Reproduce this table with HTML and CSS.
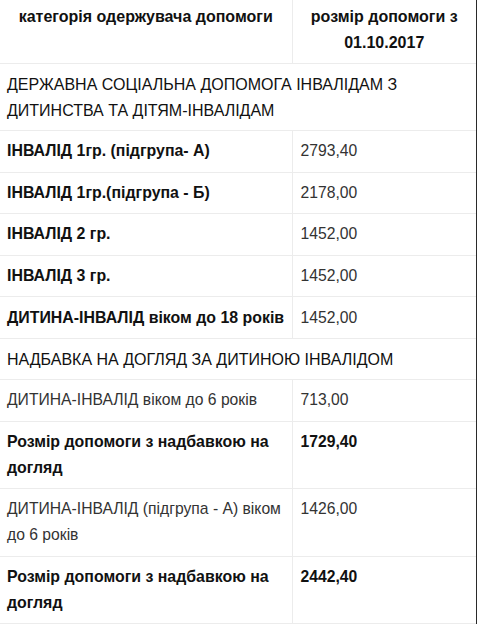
FILE: index.html
```html
<!DOCTYPE html>
<html lang="uk">
<head>
<meta charset="utf-8">
<title>Розмір допомоги</title>
<link rel="stylesheet" href="styles.css">
</head>
<body>
<div class="frame">
  <table class="aid-table">
    <colgroup>
      <col class="col-cat">
      <col class="col-sum">
    </colgroup>
    <thead>
      <tr>
        <th class="head-cell head-cat">категорія одержувача допомоги</th>
        <th class="head-cell head-sum">розмір допомоги з 01.10.2017</th>
      </tr>
    </thead>
    <tbody>
      <tr class="section">
        <td colspan="2">ДЕРЖАВНА СОЦІАЛЬНА ДОПОМОГА ІНВАЛІДАМ З ДИТИНСТВА ТА ДІТЯМ-ІНВАЛІДАМ</td>
      </tr>
      <tr>
        <td class="cat strong">ІНВАЛІД 1гр. (підгрупа- А)</td>
        <td class="sum">2793,40</td>
      </tr>
      <tr>
        <td class="cat strong">ІНВАЛІД 1гр.(підгрупа - Б)</td>
        <td class="sum">2178,00</td>
      </tr>
      <tr>
        <td class="cat strong">ІНВАЛІД 2 гр.</td>
        <td class="sum">1452,00</td>
      </tr>
      <tr>
        <td class="cat strong">ІНВАЛІД 3 гр.</td>
        <td class="sum">1452,00</td>
      </tr>
      <tr>
        <td class="cat strong">ДИТИНА-ІНВАЛІД віком до 18 років</td>
        <td class="sum">1452,00</td>
      </tr>
      <tr class="section">
        <td colspan="2">НАДБАВКА НА ДОГЛЯД ЗА ДИТИНОЮ ІНВАЛІДОМ</td>
      </tr>
      <tr>
        <td class="cat">ДИТИНА-ІНВАЛІД віком до 6 років</td>
        <td class="sum">713,00</td>
      </tr>
      <tr>
        <td class="cat strong">Розмір допомоги з надбавкою на догляд</td>
        <td class="sum strong-num">1729,40</td>
      </tr>
      <tr>
        <td class="cat">ДИТИНА-ІНВАЛІД (підгрупа - А) віком до 6 років</td>
        <td class="sum">1426,00</td>
      </tr>
      <tr>
        <td class="cat strong">Розмір допомоги з надбавкою на догляд</td>
        <td class="sum strong-num">2442,40</td>
      </tr>
    </tbody>
  </table>
</div>
</body>
</html>
```
FILE: styles.css
```css
html, body {
  margin: 0;
  padding: 0;
  background: #fff;
}

body {
  font-family: "Liberation Sans", Arial, sans-serif;
  font-size: 15.7px;
  line-height: 26px;
  color: #333;
}

.frame {
  width: 476px;
  border-right: 1px solid #2a2a2a;
  min-height: 624px;
}

.aid-table {
  width: 476px;
  border-collapse: collapse;
  table-layout: fixed;
}

.col-cat {
  width: 292px;
}

.col-sum {
  width: 184px;
}

.aid-table td,
.aid-table th {
  padding: 7.3px 7px;
  vertical-align: top;
  text-align: left;
  border-bottom: 1px solid #ececec;
}

.aid-table .cat,
.aid-table .head-cat {
  padding-right: 5px;
  border-right: 1px solid #ececec;
}

.aid-table .head-cell {
  padding-top: 4px;
  padding-bottom: 7px;
  font-size: 16px;
  font-weight: bold;
  color: #111;
  text-align: center;
}

.aid-table .head-cat {
  padding-right: 7px;
}

.aid-table .sum {
  padding-left: 8px;
}

.section td {
  font-size: 16px;
  color: #111;
  padding-top: 8px;
  padding-bottom: 6px;
}

.aid-table .strong {
  font-size: 15.9px;
  font-weight: bold;
  color: #111;
}

.strong-num {
  font-weight: bold;
  color: #111;
}
```
